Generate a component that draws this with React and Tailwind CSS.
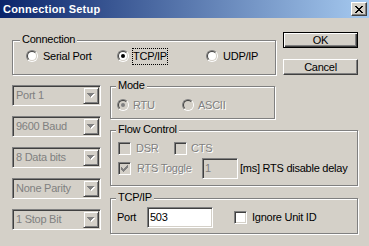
import React from 'react';

const ARROW = ['XXXXXXX', '.XXXXX.', '..XXX..', '...X...'];
const CHECK = ['......X', '.....XX', 'X...XXX', 'XX.XXX.', 'XXXXX..', '.XXX...', '..X....'];
const CLOSE = ['XX....XX', '.XX..XX.', '..XXXX..', '...XX...', '..XXXX..', '.XX..XX.', 'XX....XX'];

function Pixels({ rows, color, shadow }) {
  const w = rows[0].length + (shadow ? 1 : 0);
  const h = rows.length + (shadow ? 1 : 0);
  const rects = [];
  rows.forEach((r, y) =>
    r.split('').forEach((c, x) => {
      if (c === 'X') rects.push([x, y]);
    })
  );
  return (
    <svg width={w} height={h} viewBox={`0 0 ${w} ${h}`} shapeRendering="crispEdges" className="block">
      {shadow && rects.map(([x, y]) => <rect key={'s' + x + '-' + y} x={x + 1} y={y + 1} width="1" height="1" fill={shadow} />)}
      {rects.map(([x, y]) => <rect key={x + '-' + y} x={x} y={y} width="1" height="1" fill={color} />)}
    </svg>
  );
}

const SUNKEN =
  'border border-t-[#808080] border-l-[#808080] border-r-white border-b-white shadow-[inset_1px_1px_0_#404040,inset_-1px_-1px_0_#d4d0c8]';
const DIS = 'text-[#808080] [text-shadow:1px_1px_0_#fff]';

function Radio({ checked, disabled }) {
  return (
    <span className="relative inline-block w-[12px] h-[12px] shrink-0 rounded-full border border-t-[#808080] border-l-[#808080] border-r-white border-b-white">
      <span
        className={`absolute inset-0 rounded-full border border-t-[#404040] border-l-[#404040] border-r-[#d4d0c8] border-b-[#d4d0c8] ${
          disabled ? 'bg-[#d4d0c8]' : 'bg-white'
        }`}
      />
      {checked && (
        <span
          className={`absolute left-[3px] top-[3px] w-[4px] h-[4px] rounded-full ${disabled ? 'bg-[#808080]' : 'bg-black'}`}
        />
      )}
    </span>
  );
}

function Check({ checked, disabled }) {
  return (
    <span
      className={`flex items-center justify-center w-[13px] h-[13px] shrink-0 ${SUNKEN} ${
        disabled ? 'bg-[#d4d0c8]' : 'bg-white'
      }`}
    >
      {checked && <Pixels rows={CHECK} color={disabled ? '#808080' : '#000'} />}
    </span>
  );
}

function Group({ label, className, labelClass, children }) {
  return (
    <div className={`relative shrink-0 border border-[#808080] shadow-[inset_1px_1px_0_#fff,1px_1px_0_#fff] ${className}`}>
      <span className={`absolute top-[-8px] px-[2px] bg-[#d4d0c8] whitespace-nowrap ${labelClass}`}>{label}</span>
      {children}
    </div>
  );
}

function Combo({ text }) {
  return (
    <div className={`flex h-[21px] bg-[#d4d0c8] ${SUNKEN}`}>
      <span className="flex-1 flex items-center pl-[3px] text-[#808080] whitespace-nowrap">{text}</span>
      <span className="w-[16px] my-[1px] mr-[1px] flex items-center justify-center border border-t-[#d4d0c8] border-l-[#d4d0c8] border-r-[#404040] border-b-[#404040] shadow-[inset_1px_1px_0_#fff,inset_-1px_-1px_0_#808080]">
        <Pixels rows={ARROW} color="#808080" shadow="#fff" />
      </span>
    </div>
  );
}

function TitleBar() {
  return (
    <div className="h-[18px] flex items-center justify-between pl-[3px] pr-[2px] bg-[linear-gradient(to_right,#0a246a,#a6caf0)]">
      <span className="text-white font-bold tracking-[0.2px]">Connection Setup</span>
      <span className="w-[16px] h-[14px] flex items-center justify-center bg-[#d4d0c8] border border-t-white border-l-white border-r-[#404040] border-b-[#404040] shadow-[inset_-1px_-1px_0_#808080]">
        <Pixels rows={CLOSE} color="#000" />
      </span>
    </div>
  );
}

export default function App() {
  return (
    <div className="w-[369px] h-[246px] overflow-hidden bg-[#d4d0c8] font-['Liberation_Sans',Arial,sans-serif] text-[11px] leading-[13px] tracking-[-0.25px] text-black select-none">
      <TitleBar />

      <div className="flex h-[57px] pl-[12px]">
        <Group label="Connection" labelClass="left-[7px]" className="mt-[22px] w-[264px] h-[35px]">
          <div className="flex pl-[13px] pt-[9px]">
            <div className="flex items-center w-[91px] h-[12px]">
              <Radio />
              <span className="ml-[5px]">Serial Port</span>
            </div>
            <div className="flex items-center w-[89px] h-[12px]">
              <Radio checked />
              <span className="ml-[3px] px-[0px] py-[1px] border border-dotted border-black">TCP/IP</span>
            </div>
            <div className="flex items-center h-[12px]">
              <Radio />
              <span className="ml-[5px]">UDP/IP</span>
            </div>
          </div>
        </Group>

        <div className="ml-[7px] mt-[14px] flex flex-col shrink-0">
          <div className="w-[75px] h-[23px] flex items-center justify-center border border-black bg-[#d4d0c8] shadow-[inset_1px_1px_0_#fff,inset_-1px_-1px_0_#404040,inset_-2px_-2px_0_#808080]">
            OK
          </div>
          <div className="mt-[11px] w-[75px] h-[23px] flex items-center justify-center bg-[#d4d0c8] border border-t-white border-l-white border-r-[#404040] border-b-[#404040] shadow-[inset_-1px_-1px_0_#808080]">
            Cancel
          </div>
        </div>
      </div>

      <div className="flex mt-[10px] pl-[12px]">
        <div className="w-[89px] flex flex-col gap-[10px] shrink-0">
          <Combo text="Port 1" />
          <Combo text="9600 Baud" />
          <Combo text="8 Data bits" />
          <Combo text="None Parity" />
          <Combo text="1 Stop Bit" />
        </div>

        <div className="ml-[9px] mt-[1px] flex flex-col">
          <Group label="Mode" labelClass="left-[5px]" className="w-[165px] h-[33px]">
            <div className="flex items-center pl-[6px] pt-[12px]">
              <div className="flex items-center w-[65px] h-[12px]">
                <Radio checked disabled />
                <span className={`ml-[4px] ${DIS}`}>RTU</span>
              </div>
              <div className="flex items-center h-[12px]">
                <Radio disabled />
                <span className={`ml-[4px] ${DIS}`}>ASCII</span>
              </div>
            </div>
          </Group>

          <Group label="Flow Control" labelClass="left-[5px]" className="mt-[11px] w-[248px] h-[56px]">
            <div className="flex flex-col pl-[7px] pt-[11px]">
              <div className="flex items-center h-[13px]">
                <div className="flex items-center w-[56px]">
                  <Check disabled />
                  <span className={`ml-[5px] ${DIS}`}>DSR</span>
                </div>
                <div className="flex items-center">
                  <Check disabled />
                  <span className={`ml-[4px] ${DIS}`}>CTS</span>
                </div>
              </div>
              <div className="flex items-center mt-[3px] h-[21px]">
                <div className="flex items-center w-[84px]">
                  <Check checked disabled />
                  <span className={`ml-[6px] ${DIS}`}>RTS Toggle</span>
                </div>
                <div className={`w-[36px] h-[21px] flex items-center pl-[2px] bg-[#d4d0c8] text-[#808080] ${SUNKEN}`}>1</div>
                <span className="ml-[2px] whitespace-nowrap">[ms] RTS disable delay</span>
              </div>
            </div>
          </Group>

          <Group label="TCP/IP" labelClass="left-[5px]" className="mt-[12px] w-[248px] h-[36px]">
            <div className="flex items-center pl-[6px] pt-[8px]">
              <span className="w-[30px]">Port</span>
              <div className={`w-[66px] h-[21px] flex items-center pl-[2px] bg-white ${SUNKEN}`}>503</div>
              <div className="ml-[21px] flex items-center">
                <Check />
                <span className="ml-[5px] whitespace-nowrap">Ignore Unit ID</span>
              </div>
            </div>
          </Group>
        </div>
      </div>
    </div>
  );
}
